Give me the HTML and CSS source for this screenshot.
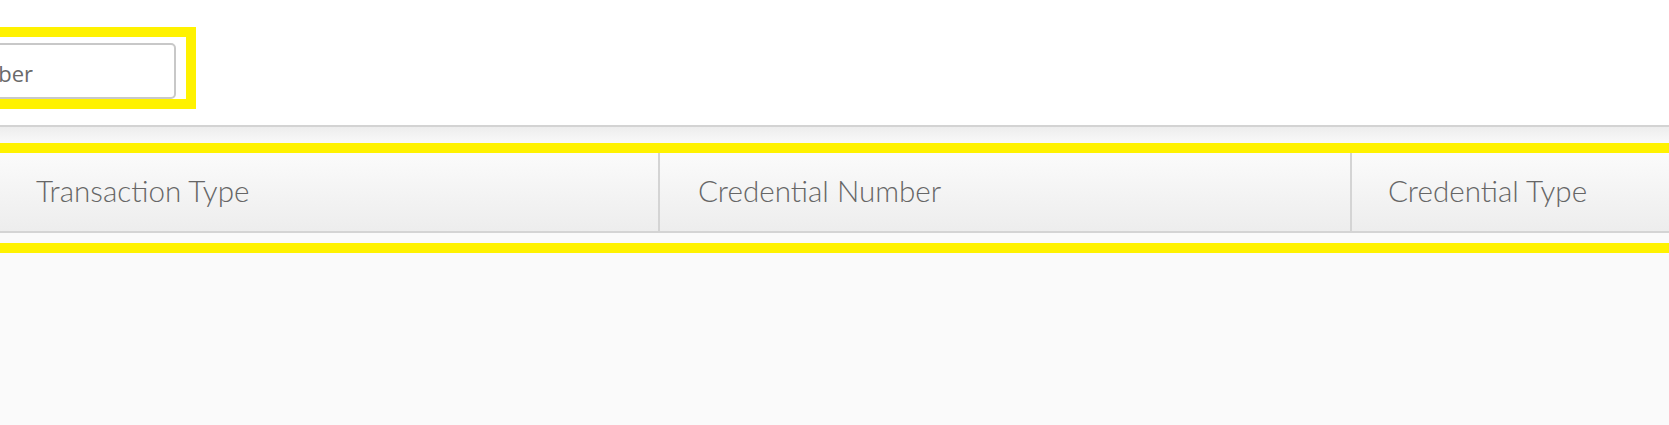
FILE: index.html
```html
<!DOCTYPE html>
<html lang="en">

<head>
    <meta charset="UTF-8">
    <meta name="viewport" content="width=device-width, initial-scale=1.0">
    <link rel="stylesheet" href="styles.css">
    <title>Transactions</title>
</head>

<body>
    <div class="toolbar">
        <div class="mark mark-search">
            <input type="text" class="search" placeholder="Credential Number">
        </div>
    </div>
    <div class="grid">
        <div class="grid-top"></div>
        <div class="mark mark-header">
            <div class="grid-header">
                <div class="col col-first">Transaction Type</div>
                <div class="col col-mid">Credential Number</div>
                <div class="col col-last">Credential Type</div>
            </div>
        </div>
        <div class="grid-body"></div>
    </div>
</body>

</html>
```

FILE: styles.css
```css
html {
    background: #ffffff;
}

body {
    margin: 0;
    overflow: hidden;
    font-family: "Open Sans", "Noto Sans", sans-serif;
}

/* barra de busqueda */
.toolbar {
    background: #ffffff;
    padding: 27px 0 16px 0;
    border-bottom: 2px solid #d3d3d3;
}

.mark {
    border: 10px solid #fff200;
    box-sizing: border-box;
}

.mark-search {
    display: flex;
    width: 496px;
    margin-left: -300px;
    padding: 6px 10px 0 0;
}

.search {
    flex: 1;
    height: 56px;
    box-sizing: border-box;
    border: 2px solid #c8c8c8;
    border-radius: 5px;
    padding: 4px 141px 0 0;
    text-align: right;
    font-family: "Open Sans", sans-serif;
    font-size: 22px;
    color: #6a6a6a;
    outline: none;
}

.search::placeholder {
    color: #6a6a6a;
    opacity: 1;
}

/* tabla */
.grid {
    background: #fafafa;
    height: 298px;
}

.grid-top {
    height: 16px;
    background: linear-gradient(#ededed, #f9f9f9);
}

.mark-header {
    border-left: none;
    border-right: none;
    padding-bottom: 10px;
}

.grid-header {
    display: flex;
    height: 80px;
    box-sizing: border-box;
    background: linear-gradient(#fbfbfb, #ededed);
    border-bottom: 2px solid #d4d4d4;
}

.col {
    display: flex;
    align-items: center;
    box-sizing: border-box;
    font-family: "Lato", "Open Sans", sans-serif;
    font-size: 29.6px;
    font-weight: 300;
    color: #666666;
    white-space: nowrap;
    padding-bottom: 4px;
}

.col-first {
    width: 658px;
    padding-left: 36px;
}

.col-mid {
    width: 692px;
    padding-left: 38px;
    border-left: 2px solid #d4d4d4;
}

.col-last {
    flex: 1;
    padding-left: 36px;
    border-left: 2px solid #d4d4d4;
}
```
